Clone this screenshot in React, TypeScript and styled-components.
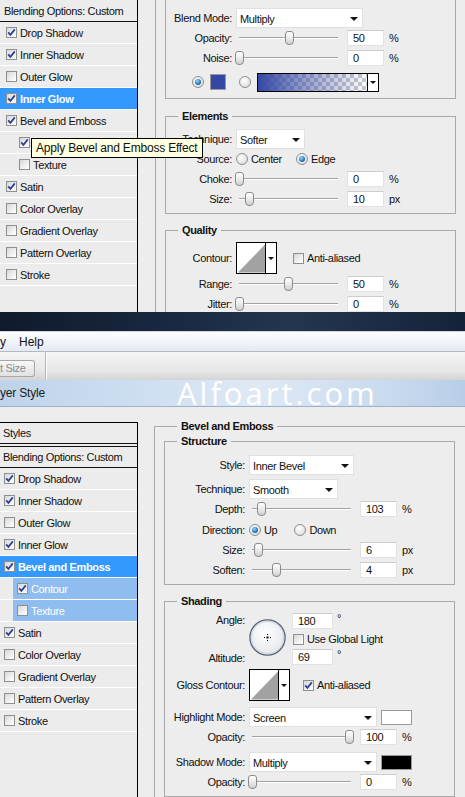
import React from 'react';
import styled, { createGlobalStyle } from 'styled-components';

const GlobalStyle = createGlobalStyle`
  * { box-sizing: border-box; }
  html, body { margin: 0; padding: 0; background: #ededed; }
  body {
    font-family: "Liberation Sans", Arial, sans-serif;
    font-size: 11px;
    letter-spacing: -0.35px;
    color: #111;
  }
`;

type Effect = { name: string; on: boolean; sub?: boolean; state?: 'main' | 'sub' };

const topEffects: Effect[] = [
  { name: 'Drop Shadow', on: true },
  { name: 'Inner Shadow', on: true },
  { name: 'Outer Glow', on: false },
  { name: 'Inner Glow', on: true, state: 'main' },
  { name: 'Bevel and Emboss', on: true },
  { name: 'Contour', on: true, sub: true },
  { name: 'Texture', on: false, sub: true },
  { name: 'Satin', on: true },
  { name: 'Color Overlay', on: false },
  { name: 'Gradient Overlay', on: false },
  { name: 'Pattern Overlay', on: false },
  { name: 'Stroke', on: false },
];

const bottomEffects: Effect[] = [
  { name: 'Drop Shadow', on: true },
  { name: 'Inner Shadow', on: true },
  { name: 'Outer Glow', on: false },
  { name: 'Inner Glow', on: true },
  { name: 'Bevel and Emboss', on: true, state: 'main' },
  { name: 'Contour', on: true, sub: true, state: 'sub' },
  { name: 'Texture', on: false, sub: true, state: 'sub' },
  { name: 'Satin', on: true },
  { name: 'Color Overlay', on: false },
  { name: 'Gradient Overlay', on: false },
  { name: 'Pattern Overlay', on: false },
  { name: 'Stroke', on: false },
];

const Page = styled.div`
  width: 465px;
  height: 797px;
  overflow: hidden;
  display: flex;
  flex-direction: column;
`;

const Dialog = styled.div<{ $h?: number }>`
  position: relative;
  display: flex;
  flex: ${(p) => (p.$h ? `0 0 ${p.$h}px` : '1 1 auto')};
  overflow: hidden;
  background: #ededed;
`;

/* ---------- left effects list ---------- */

const StyleList = styled.div<{ $top?: number }>`
  width: 138px;
  flex-shrink: 0;
  margin-top: ${(p) => p.$top ?? 0}px;
  border-right: 1px solid #000;
  border-top: ${(p) => (p.$top ? '1px solid #000' : '0')};
  background: #ececec;
`;

const ListRow = styled.div<{
  $pad: number;
  $sub?: boolean;
  $state?: 'main' | 'sub';
  $rule?: 'single' | 'double';
  $h?: number;
}>`
  display: flex;
  align-items: center;
  gap: 3px;
  height: ${(p) => p.$h ?? 22}px;
  padding-left: ${(p) => (p.$sub ? 13 + p.$pad : p.$pad)}px;
  border-bottom: ${(p) =>
    p.$rule === 'double'
      ? '4px double #111'
      : p.$rule === 'single'
      ? '1px solid #111'
      : '1px solid #fff'};
  background: ${(p) =>
    p.$state === 'main'
      ? '#3399ff'
      : p.$state === 'sub'
      ? 'linear-gradient(90deg, transparent 13px, #8fbdef 13px)'
      : 'transparent'};
  color: ${(p) => (p.$state ? '#fff' : '#111')};
  font-weight: ${(p) => (p.$state === 'main' ? 'bold' : 'normal')};
  white-space: nowrap;
`;

const Box = styled.span`
  width: 11px;
  height: 11px;
  flex-shrink: 0;
  display: inline-flex;
  align-items: center;
  justify-content: center;
  border: 1px solid #8e8f8f;
  background: linear-gradient(135deg, #d6d6d6 0%, #f3f3f3 65%, #fff 100%);
`;

function CheckBox({ on }: { on?: boolean }) {
  return (
    <Box>
      {on && (
        <svg width="9" height="9" viewBox="0 0 9 9">
          <path d="M1.2 4.4 L3.4 6.9 L7.8 1.4" fill="none" stroke="#2d3f94" strokeWidth="1.7" />
        </svg>
      )}
    </Box>
  );
}

const Tooltip = styled.div`
  position: absolute;
  left: 31px;
  top: 138px;
  z-index: 2;
  height: 20px;
  padding: 0 5px 0 4px;
  border: 1px solid #000;
  background: #ffffe1;
  font-size: 12px;
  letter-spacing: -0.2px;
  line-height: 18px;
  white-space: nowrap;
`;

/* ---------- settings side ---------- */

const Settings = styled.div<{ $top: number; $left: number }>`
  flex: 1;
  min-width: 0;
  display: flex;
  flex-direction: column;
  padding: ${(p) => p.$top}px 0 0 ${(p) => p.$left}px;
`;

const Frame = styled.fieldset<{ $titled?: boolean }>`
  flex: 1;
  min-width: 0;
  margin: 0;
  padding: 0 0 0 9px;
  border: 0;
  border-left: 1px solid #a9a9a9;
  border-top: ${(p) => (p.$titled ? '1px solid #a9a9a9' : '0')};
`;

const GroupBox = styled.fieldset<{ $cut?: boolean; $mt?: number; $pt: number; $pb?: number; $lw: number }>`
  --label-w: ${(p) => p.$lw}px;
  width: 291px;
  min-width: 0;
  margin: ${(p) => p.$mt ?? 0}px 0 0;
  padding: ${(p) => p.$pt}px 0 ${(p) => p.$pb ?? 0}px;
  border: 1px solid #a9a9a9;
  border-top: ${(p) => (p.$cut ? '0' : '1px solid #a9a9a9')};
`;

const Legend = styled.legend<{ $ml?: number }>`
  margin-left: ${(p) => p.$ml ?? 12}px;
  padding: 0 4px;
  height: 13px;
  line-height: 13px;
  font-weight: bold;
`;

const Field = styled.div<{ $h?: number; $mt?: number; $pl?: number }>`
  display: flex;
  align-items: center;
  height: ${(p) => p.$h ?? 20}px;
  margin-top: ${(p) => p.$mt ?? 0}px;
  padding-left: ${(p) => p.$pl ?? 0}px;
  white-space: nowrap;
`;

const Label = styled.span`
  width: var(--label-w);
  margin-right: 4px;
  flex-shrink: 0;
  text-align: right;
  white-space: nowrap;
`;

const Caret = styled.span`
  width: 0;
  height: 0;
  border-left: 4px solid transparent;
  border-right: 4px solid transparent;
  border-top: 4px solid #111;
`;

const SelectBox = styled.div<{ $w: number }>`
  width: ${(p) => p.$w}px;
  height: 20px;
  flex-shrink: 0;
  display: flex;
  align-items: center;
  justify-content: space-between;
  padding: 1px 4px 0 3px;
  background: #fff;
  border: 1px solid #e0e0e0;
`;

function Select({ w, value }: { w: number; value: string }) {
  return (
    <SelectBox $w={w}>
      {value}
      <Caret />
    </SelectBox>
  );
}

const Track = styled.div`
  position: relative;
  width: 99px;
  height: 20px;
  margin-left: 3px;
  flex-shrink: 0;
  &::before {
    content: '';
    position: absolute;
    left: 0;
    right: 0;
    top: 9px;
    height: 1px;
    background: #a3a3a3;
    box-shadow: 0 1px 0 #fff;
  }
`;

const Thumb = styled.span`
  position: absolute;
  top: 3px;
  width: 9px;
  height: 14px;
  margin-left: -4.5px;
  border: 1px solid #8b8b8b;
  border-radius: 3px 3px 4px 4px;
  background: linear-gradient(#ffffff, #e6e6e6 60%, #cfcfcf);
`;

const NumBox = styled.span<{ $w?: number; $ml?: number }>`
  width: ${(p) => p.$w ?? 37}px;
  height: 16px;
  margin-left: ${(p) => p.$ml ?? 9}px;
  flex-shrink: 0;
  padding: 1px 0 0 5px;
  background: #fff;
  border: 1px solid #e2e2e2;
  border-top-color: #cdcdcd;
  line-height: 13px;
`;

const Unit = styled.span`
  margin-left: 5px;
`;

const Degree = styled.span`
  margin-left: 4px;
  align-self: flex-start;
  line-height: 11px;
`;

function SliderField({ label, pct, value, unit }: { label: string; pct: number; value: string; unit: string }) {
  return (
    <Field>
      <Label>{label}</Label>
      <Track>
        <Thumb style={{ left: `${pct}%` }} />
      </Track>
      <NumBox>{value}</NumBox>
      <Unit>{unit}</Unit>
    </Field>
  );
}

const Radio = styled.span<{ $on?: boolean }>`
  width: 12px;
  height: 12px;
  flex-shrink: 0;
  display: inline-flex;
  align-items: center;
  justify-content: center;
  border-radius: 50%;
  border: 1px solid #8e8f8f;
  background: radial-gradient(circle at 40% 35%, #ffffff, #d5d5d5);
  &::after {
    content: '';
    display: ${(p) => (p.$on ? 'block' : 'none')};
    width: 6px;
    height: 6px;
    border-radius: 50%;
    background: radial-gradient(circle at 40% 35%, #9fd8ff, #1d74b8 60%, #0d4a82);
  }
`;

const Option = styled.span<{ $ml?: number }>`
  display: inline-flex;
  align-items: center;
  gap: 3px;
  margin-left: ${(p) => p.$ml ?? 0}px;
`;

const Swatch = styled.span<{ $w: number; $h: number; $color: string; $ml?: number }>`
  width: ${(p) => p.$w}px;
  height: ${(p) => p.$h}px;
  margin-left: ${(p) => p.$ml ?? 0}px;
  flex-shrink: 0;
  background: ${(p) => p.$color};
  border: 1px solid #9a9a9a;
`;

const GradientBar = styled.div`
  width: 122px;
  height: 19px;
  margin-left: 6px;
  flex-shrink: 0;
  display: flex;
  border: 1px solid #000;
  background: #fff;
`;

const GradientFill = styled.div`
  flex: 1;
  background: linear-gradient(90deg, #3447a5 0%, rgba(52, 71, 165, 0.6) 35%, rgba(52, 71, 165, 0) 100%),
    repeating-conic-gradient(#c9c9c9 0% 25%, #ffffff 0% 50%) 0 0 / 8px 8px;
`;

const DropCell = styled.div`
  width: 11px;
  flex-shrink: 0;
  display: flex;
  align-items: center;
  justify-content: center;
  border-left: 1px solid #000;
  background: #fff;
`;

const SmallCaret = styled(Caret)`
  border-left-width: 3px;
  border-right-width: 3px;
  border-top-width: 3px;
`;

const ContourBox = styled.div`
  width: 41px;
  height: 32px;
  flex-shrink: 0;
  display: flex;
  border: 1px solid #000;
  background: #fff;
`;

function ContourThumb() {
  return (
    <ContourBox>
      <svg width="29" height="30" viewBox="0 0 29 30">
        <rect width="29" height="30" fill="#fff" />
        <path d="M1 30 L29 1 L29 30 Z" fill="#a2a2a2" />
      </svg>
      <DropCell>
        <SmallCaret />
      </DropCell>
    </ContourBox>
  );
}

const AngleBlock = styled.div`
  display: flex;
  height: 52px;
`;

const LabelStack = styled.div`
  width: var(--label-w);
  margin-right: 4px;
  flex-shrink: 0;
  display: flex;
  flex-direction: column;
  justify-content: space-between;
  text-align: right;
  line-height: 14px;
`;

const ValueStack = styled.div`
  display: flex;
  flex-direction: column;
  gap: 2px;
  margin-left: 6px;
`;

const ValueRow = styled.div`
  display: flex;
  align-items: center;
  height: 16px;
  white-space: nowrap;
`;

function Dial() {
  return (
    <svg width="37" height="37" viewBox="0 0 37 37" style={{ marginTop: 6, flexShrink: 0 }}>
      <defs>
        <radialGradient id="dialFill" cx="45%" cy="40%" r="60%">
          <stop offset="0" stopColor="#ffffff" />
          <stop offset="1" stopColor="#e6e8ec" />
        </radialGradient>
      </defs>
      <circle cx="18.5" cy="18.5" r="17.6" fill="url(#dialFill)" stroke="#56627c" strokeWidth="1.3" />
      <circle cx="18.5" cy="18.5" r="16.2" fill="none" stroke="#cdd2dc" strokeWidth="1" />
      <rect x="17.5" y="17.5" width="2" height="2" fill="#000" />
      <rect x="15" y="18" width="1" height="1" fill="#000" />
      <rect x="21" y="18" width="1" height="1" fill="#000" />
      <rect x="18" y="15" width="1" height="1" fill="#000" />
      <rect x="18" y="21" width="1" height="1" fill="#000" />
    </svg>
  );
}

/* ---------- window chrome between the two shots ---------- */

const DarkBand = styled.div`
  flex: 0 0 19px;
  background: linear-gradient(90deg, #0f1a2c 0%, #1a2a43 40%, #24364f 62%, #15233a 100%);
`;

const MenuBar = styled.div`
  flex: 0 0 21px;
  display: flex;
  align-items: center;
  gap: 13px;
  border-top: 1px solid #cfd6e0;
  border-bottom: 1px solid #b3bac5;
  background: linear-gradient(#fdfdfe, #e5eaf2);
  font-size: 12px;
  letter-spacing: 0;
`;

const Toolbar = styled.div`
  flex: 0 0 28px;
  display: flex;
  align-items: flex-start;
  background: linear-gradient(#f4f4f4, #e6e6e6 70%, #d4d4d4);
`;

const ToolButton = styled.div`
  margin-top: 8px;
  width: 35px;
  height: 17px;
  border: 1px solid #a7a7a7;
  border-left: 0;
  border-radius: 0 3px 3px 0;
  background: linear-gradient(#f7f7f7, #e1e1e1);
  color: #8a8a8a;
  line-height: 15px;
  white-space: nowrap;
`;

const ToolDivider = styled.div`
  width: 1px;
  align-self: stretch;
  margin-left: 10px;
  background: #b5b5b5;
  box-shadow: 1px 0 0 #fff;
`;

const TitleBar = styled.div`
  flex: 0 0 27px;
  display: flex;
  align-items: center;
  border-bottom: 1px solid #9cb1cb;
  background: linear-gradient(90deg, #bed3eb 0%, #cddef1 30%, #dfe9f5 55%, #cadbef 82%, #b8cee8 100%);
`;

const TitleText = styled.span`
  width: 177px;
  flex-shrink: 0;
  font-size: 12px;
  letter-spacing: -0.2px;
  color: #1a1a1a;
`;

const Watermark = styled.span`
  font-family: "Open Sans", "Noto Sans", sans-serif;
  font-size: 31px;
  line-height: 26px;
  letter-spacing: 3px;
  color: #ffffff;
  white-space: nowrap;
`;

function EffectList({ items, pad, top, header }: { items: Effect[]; pad: number; top?: number; header?: boolean }) {
  return (
    <StyleList $top={top}>
      {header && (
        <ListRow $pad={3} $rule="double" $h={24}>
          Styles
        </ListRow>
      )}
      <ListRow $pad={header ? 3 : 4} $rule="single" $h={header ? 21 : 22}>
        Blending Options: Custom
      </ListRow>
      {items.map((e) => (
        <ListRow key={e.name} $pad={pad} $sub={e.sub} $state={e.state}>
          <CheckBox on={e.on} />
          {e.name}
        </ListRow>
      ))}
    </StyleList>
  );
}

export default function App() {
  return (
    <Page>
      <GlobalStyle />

      <Dialog $h={312}>
        <EffectList items={topEffects} pad={6} />
        <Tooltip>Apply Bevel and Emboss Effect</Tooltip>
        <Settings $top={0} $left={17}>
          <Frame>
            <GroupBox $cut $pt={8} $pb={6} $lw={66}>
              <Field>
                <Label>Blend Mode:</Label>
                <Select w={127} value="Multiply" />
              </Field>
              <SliderField label="Opacity:" pct={51} value="50" unit="%" />
              <SliderField label="Noise:" pct={1} value="0" unit="%" />
              <Field $mt={4} $pl={26}>
                <Radio $on />
                <Swatch $w={16} $h={16} $color="#3447a5" $ml={6} />
                <Radio style={{ marginLeft: 13 }} />
                <GradientBar>
                  <GradientFill />
                  <DropCell>
                    <SmallCaret />
                  </DropCell>
                </GradientBar>
              </Field>
            </GroupBox>

            <GroupBox $mt={11} $pt={6} $pb={4} $lw={66}>
              <Legend>Elements</Legend>
              <Field>
                <Label>Technique:</Label>
                <Select w={69} value="Softer" />
              </Field>
              <Field>
                <Label>Source:</Label>
                <Option>
                  <Radio />
                  Center
                </Option>
                <Option $ml={14}>
                  <Radio $on />
                  Edge
                </Option>
              </Field>
              <SliderField label="Choke:" pct={1} value="0" unit="%" />
              <SliderField label="Size:" pct={11} value="10" unit="px" />
            </GroupBox>

            <GroupBox $mt={10} $pt={5} $pb={4} $lw={66}>
              <Legend>Quality</Legend>
              <Field $h={32}>
                <Label>Contour:</Label>
                <ContourThumb />
                <Option $ml={16}>
                  <CheckBox />
                  Anti-aliased
                </Option>
              </Field>
              <SliderField label="Range:" pct={50} value="50" unit="%" />
              <SliderField label="Jitter:" pct={1} value="0" unit="%" />
            </GroupBox>
          </Frame>
        </Settings>
      </Dialog>

      <DarkBand />
      <MenuBar>
        <span>y</span>
        <span>Help</span>
      </MenuBar>
      <Toolbar>
        <ToolButton>t Size</ToolButton>
        <ToolDivider />
      </Toolbar>
      <TitleBar>
        <TitleText>yer Style</TitleText>
        <Watermark>Alfoart.com</Watermark>
      </TitleBar>

      <Dialog>
        <EffectList items={bottomEffects} pad={4} top={15} header />
        <Settings $top={13} $left={16}>
          <Frame $titled>
            <Legend $ml={13}>Bevel and Emboss</Legend>
            <GroupBox $mt={2} $pt={7} $pb={4} $lw={80}>
              <Legend>Structure</Legend>
              <Field>
                <Label>Style:</Label>
                <Select w={105} value="Inner Bevel" />
              </Field>
              <Field $mt={4}>
                <Label>Technique:</Label>
                <Select w={89} value="Smooth" />
              </Field>
              <SliderField label="Depth:" pct={10} value="103" unit="%" />
              <Field $h={21}>
                <Label>Direction:</Label>
                <Option>
                  <Radio $on />
                  Up
                </Option>
                <Option $ml={17}>
                  <Radio />
                  Down
                </Option>
              </Field>
              <SliderField label="Size:" pct={7} value="6" unit="px" />
              <SliderField label="Soften:" pct={25} value="4" unit="px" />
            </GroupBox>

            <GroupBox $mt={10} $pt={5} $pb={4} $lw={80}>
              <Legend>Shading</Legend>
              <AngleBlock>
                <LabelStack>
                  <span>Angle:</span>
                  <span>Altitude:</span>
                </LabelStack>
                <Dial />
                <ValueStack>
                  <ValueRow>
                    <NumBox $w={41} $ml={0}>
                      180
                    </NumBox>
                    <Degree>°</Degree>
                  </ValueRow>
                  <ValueRow>
                    <Option $ml={1}>
                      <CheckBox />
                      Use Global Light
                    </Option>
                  </ValueRow>
                  <ValueRow>
                    <NumBox $w={41} $ml={0}>
                      69
                    </NumBox>
                    <Degree>°</Degree>
                  </ValueRow>
                </ValueStack>
              </AngleBlock>
              <Field $h={32} $mt={4}>
                <Label>Gloss Contour:</Label>
                <ContourThumb />
                <Option $ml={13}>
                  <CheckBox on />
                  Anti-aliased
                </Option>
              </Field>
              <Field $mt={6}>
                <Label>Highlight Mode:</Label>
                <Select w={128} value="Screen" />
                <Swatch $w={31} $h={15} $color="#ffffff" $ml={4} />
              </Field>
              <SliderField label="Opacity:" pct={98} value="100" unit="%" />
              <Field $mt={5}>
                <Label>Shadow Mode:</Label>
                <Select w={128} value="Multiply" />
                <Swatch $w={31} $h={15} $color="#000000" $ml={4} />
              </Field>
              <SliderField label="Opacity:" pct={0} value="0" unit="%" />
            </GroupBox>
          </Frame>
        </Settings>
      </Dialog>
    </Page>
  );
}
